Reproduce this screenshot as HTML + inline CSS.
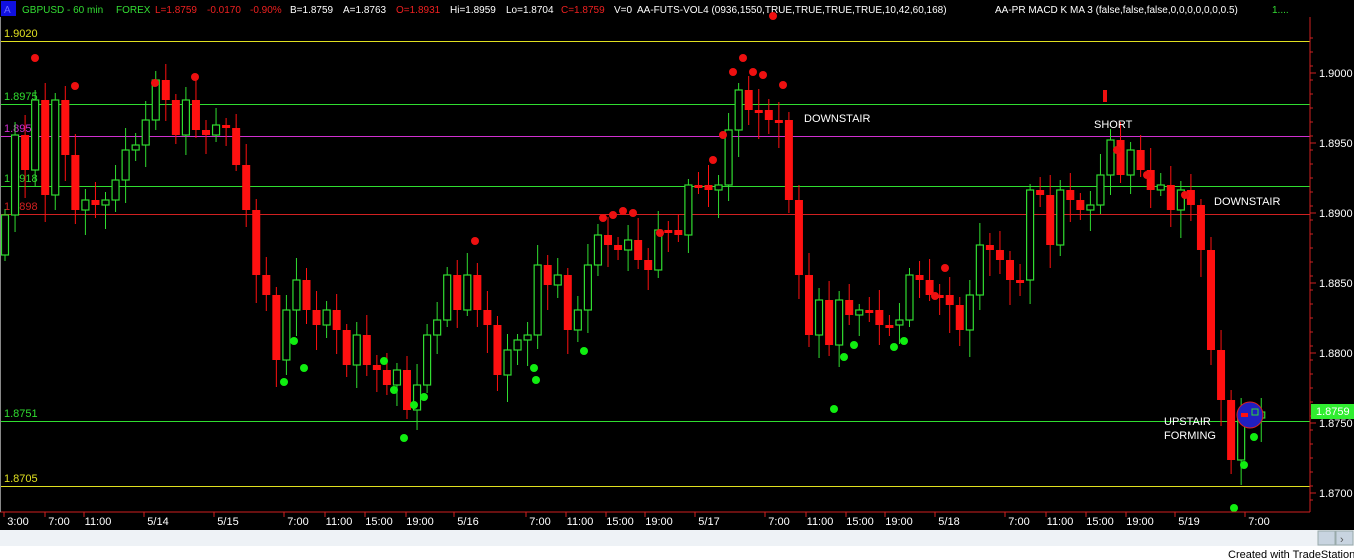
<!DOCTYPE html>
<html><head><meta charset="utf-8"><style>
html,body{margin:0;padding:0;background:#000;width:1354px;height:560px;overflow:hidden;font-family:"Liberation Sans",sans-serif}
svg{display:block}
text{font-family:"Liberation Sans",sans-serif;font-size:11px}
.h{font-size:10px}
</style></head><body>
<svg id="s" width="1354" height="560" xmlns="http://www.w3.org/2000/svg">
<rect width="1354" height="560" fill="#000"/>
<rect x="1" y="1" width="15" height="15" fill="#1010e0"/>
<text x="4" y="13" fill="#6a6aff" class="h">A</text>
<text class="h" x="22" y="13" fill="#33dd33">GBPUSD - 60 min</text>
<text class="h" x="116" y="13" fill="#33dd33">FOREX</text>
<text class="h" x="155" y="13" fill="#ee2020">L=1.8759</text>
<text class="h" x="207" y="13" fill="#ee2020">-0.0170</text>
<text class="h" x="250" y="13" fill="#ee2020">-0.90%</text>
<text class="h" x="290" y="13" fill="#fff">B=1.8759</text>
<text class="h" x="343" y="13" fill="#fff">A=1.8763</text>
<text class="h" x="396" y="13" fill="#ee2020">O=1.8931</text>
<text class="h" x="450" y="13" fill="#fff">Hi=1.8959</text>
<text class="h" x="506" y="13" fill="#fff">Lo=1.8704</text>
<text class="h" x="561" y="13" fill="#ee2020">C=1.8759</text>
<text class="h" x="614" y="13" fill="#fff">V=0</text>
<text class="h" x="637" y="13" fill="#fff">AA-FUTS-VOL4  (0936,1550,TRUE,TRUE,TRUE,TRUE,10,42,60,168)</text>
<text class="h" x="995" y="13" fill="#fff">AA-PR MACD K MA 3  (false,false,false,0,0,0,0,0,0,0.5)</text>
<text class="h" x="1272" y="13" fill="#33dd33">1....</text>
<g id="g"></g>
<line x1="1310" y1="17" x2="1310" y2="512" stroke="#d02020"/>
<line x1="0" y1="512" x2="1310" y2="512" stroke="#d02020"/>
<line x1="0.5" y1="17" x2="0.5" y2="512" stroke="#888"/>
<rect x="0" y="530" width="1354" height="16" fill="#eef2f6"/>
<rect x="1318" y="531" width="17" height="14" fill="#c8d4e0" stroke="#9aa"/>
<rect x="1336" y="531" width="17" height="14" fill="#c8d4e0" stroke="#9aa"/>
<text x="1340" y="543" fill="#555" font-size="11">›</text>
<rect x="0" y="546" width="1354" height="14" fill="#fff"/>
<text x="1228" y="558" fill="#000" font-size="10">Created with TradeStation</text>
</svg>
<script>
var g=document.getElementById('g'),NS='http://www.w3.org/2000/svg';
function el(t,a,txt){var e=document.createElementNS(NS,t);for(var k in a)e.setAttribute(k,a[k]);if(txt)e.textContent=txt;g.appendChild(e);return e}
function Y(p){return 493-(p-1.87)*14000}
[[41,'#e0e020','1.9020','#e0e020'],[104,'#30dd30','1.8975','#30dd30'],[136,'#d030d0','1.8953','#d030d0'],[186,'#30dd30','1.8918','#30dd30'],[214,'#d02020','1.8898','#d02020'],[421,'#30dd30','1.8751','#30dd30'],[486,'#e0e020','1.8705','#e0e020']].forEach(function(l){
 el('line',{x1:0,y1:l[0]+.5,x2:1310,y2:l[0]+.5,stroke:l[1]});
 el('text',{x:4,y:l[0]-4,fill:l[3]},l[2]);
});
[1.9,1.895,1.89,1.885,1.88,1.875,1.87].forEach(function(p){var yy=Y(p);
 el('line',{x1:1310,y1:yy,x2:1316,y2:yy,stroke:'#d02020'});
 el('text',{x:1319,y:yy+4,fill:'#fff','font-size':'10.5'},p.toFixed(4));});
for(var yy=38;yy<512;yy+=14)el('line',{x1:1310,y1:yy,x2:1313,y2:yy,stroke:'#d02020'});
var c=[215,135,170,100,195,100,155,210,200,205,200,180,150,145,120,80,100,135,100,130,135,125,128,165,210,275,295,360,310,280,310,325,310,330,365,335,365,370,385,370,410,385,335,320,275,310,275,310,325,375,350,340,335,265,285,275,330,310,265,235,245,250,240,260,270,230,230,235,185,185,190,185,130,90,110,110,120,120,200,275,335,300,345,300,315,310,310,325,325,320,275,280,295,295,305,330,295,245,250,260,280,280,190,195,245,190,200,210,205,175,140,175,150,170,190,185,210,190,205,250,350,400,460,415,412,412];
var prev=255;
for(var i=0;i<c.length;i++){var x=5+i*10.05,o=prev,cl=c[i];if(i==c.length-1)o=418;
 var tp=Math.min(o,cl),bt=Math.max(o,cl);if(bt-tp<3){bt=tp+3}
 var up=cl<o,col=up?'#30dd30':'#ff1010';
 var hi=tp-6-((i*7)%17),lo=bt+6+((i*11)%23);
 el('line',{x1:x,y1:hi,x2:x,y2:lo,stroke:col});
 if(up)el('rect',{x:x-3.5,y:tp,width:7,height:bt-tp,fill:'#000',stroke:col,'stroke-width':1.2});
 else el('rect',{x:x-4,y:tp,width:8,height:bt-tp,fill:col});
 prev=cl;}
[[35,58],[75,86],[155,83],[195,77],[475,241],[603,218],[613,215],[623,211],[633,213],[660,233],[713,160],[723,135],[733,72],[743,58],[753,72],[763,75],[773,16],[783,85],[935,296],[945,268],[1117,150],[1147,175],[1185,195]].forEach(function(d){el('circle',{cx:d[0],cy:d[1],r:4,fill:'#ee1010'})});
[[284,382],[294,341],[304,368],[384,361],[394,390],[404,438],[414,405],[424,397],[534,368],[536,380],[584,351],[834,409],[844,357],[854,345],[894,347],[904,341],[1234,508],[1244,465],[1254,437]].forEach(function(d){el('circle',{cx:d[0],cy:d[1],r:4,fill:'#10ee10'})});
el('circle',{cx:1250,cy:415,r:13,fill:'#2020c0',stroke:'#e02020'});
el('rect',{x:1241,y:413,width:7,height:4,fill:'#ff1010'});
el('rect',{x:1252,y:409,width:6,height:6,fill:'none',stroke:'#30dd30'});
el('rect',{x:1103,y:90,width:4,height:12,fill:'#ee1010'});
el('rect',{x:1311,y:404,width:43,height:15,fill:'#30ee30'});
el('text',{x:1316,y:415,fill:'#fff','font-size':'10.5'},'1.8759');
[[804,122,'DOWNSTAIR'],[1094,128,'SHORT'],[1214,205,'DOWNSTAIR'],[1164,425,'UPSTAIR'],[1164,439,'FORMING']].forEach(function(t){el('text',{x:t[0],y:t[1],fill:'#fff','font-size':'10.5'},t[2])});
[[18,'3:00'],[59,'7:00'],[98,'11:00'],[158,'5/14'],[228,'5/15'],[298,'7:00'],[339,'11:00'],[379,'15:00'],[420,'19:00'],[468,'5/16'],[540,'7:00'],[580,'11:00'],[620,'15:00'],[659,'19:00'],[709,'5/17'],[779,'7:00'],[820,'11:00'],[860,'15:00'],[899,'19:00'],[949,'5/18'],[1019,'7:00'],[1060,'11:00'],[1100,'15:00'],[1140,'19:00'],[1189,'5/19'],[1259,'7:00']].forEach(function(t){
 el('text',{x:t[0],y:525,fill:'#fff','text-anchor':'middle','font-size':'10.5'},t[1]);
 el('line',{x1:t[0]-14,y1:512,x2:t[0]-14,y2:517,stroke:'#d02020'});});
</script>
</body></html>
